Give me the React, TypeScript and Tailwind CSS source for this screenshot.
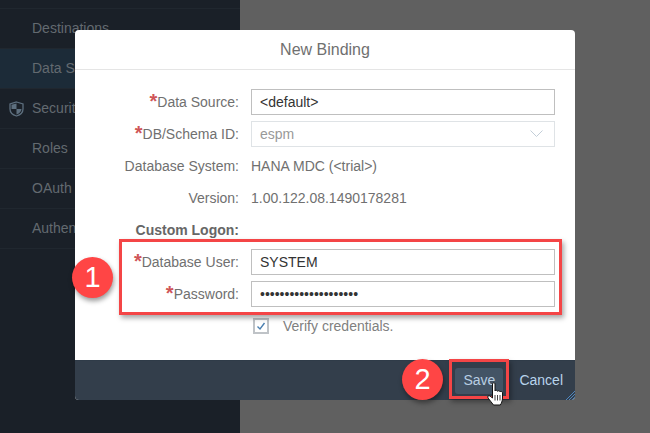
const FONT = "font-['Liberation_Sans',Arial,sans-serif]";

const NAV = [
	{ label: "Destinations" },
	{ label: "Data Sources", selected: true },
	{ label: "Security", icon: true, header: true },
	{ label: "Roles" },
	{ label: "OAuth" },
	{ label: "Authentication" },
];

function Shield() {
	return (
		<svg width="15" height="16" viewBox="0 0 15 16" className="absolute left-[9px] top-[12px]">
			<path d="M7.5 1 L14 3 V8 C14 11.5 11 14 7.5 15 C4 14 1 11.5 1 8 V3 Z" fill="none" stroke="#5d6f7f" strokeWidth="1.3" />
			<path d="M7.5 2.5 V8 H2.5 V3.8 Z" fill="#5d6f7f" />
			<path d="M7.5 8 H12.5 C12.2 10.8 10 12.6 7.5 13.5 Z" fill="#5d6f7f" />
		</svg>
	);
}

function Sidebar() {
	return (
		<div className="flex h-full w-[240px] shrink-0 flex-col bg-[#1a2028] pt-[8px]">
			{NAV.map((item) => (
				<div
					key={item.label}
					className={`relative flex h-[40px] items-center border-t border-[#20272f] pl-[32px] text-[14px] text-[#636a70] ${
						item.selected ? "bg-[#1c2b38]" : ""
					}`}
				>
					{item.icon && <Shield />}
					{item.label}
				</div>
			))}
			<div className="border-t border-[#20272f]" />
		</div>
	);
}

function Label({ text, required, bold }: { text: string; required?: boolean; bold?: boolean }) {
	return (
		<div className={`flex w-[164px] shrink-0 items-center justify-end text-[14px] ${bold ? "font-bold text-[#666666]" : "text-[#707070]"}`}>
			{required && <span className="mt-[-3px] text-[20px] leading-none font-bold text-[#cf5558]">*</span>}
			<span>{text}:</span>
		</div>
	);
}

function Row({ children, ...label }: { text: string; required?: boolean; bold?: boolean; children?: React.ReactNode }) {
	return (
		<div className="flex h-[32px] items-center gap-[12px]">
			<Label {...label} />
			{children}
		</div>
	);
}

function Input({ value, disabled, chevron }: { value: string; disabled?: boolean; chevron?: boolean }) {
	return (
		<div
			className={`flex h-[26px] w-[304px] items-center justify-between border pl-[8px] pr-[11px] text-[14px] ${
				disabled ? "border-[#dfe3e6] text-[#999999]" : "border-[#bfbfbf] text-[#333333]"
			}`}
		>
			<span>{value}</span>
			{chevron && (
				<svg width="13" height="8" viewBox="0 0 13 8">
					<path d="M0.5 0.5 L6.5 6.5 L12.5 0.5" fill="none" stroke="#c3ced8" strokeWidth="1" />
				</svg>
			)}
		</div>
	);
}

function Badge({ n, className }: { n: string; className: string }) {
	return (
		<div
			className={`absolute flex h-[41px] w-[41px] items-center justify-center rounded-full bg-[#ff4545] text-[29px] text-white shadow-[1px_3px_5px_rgba(0,0,0,0.4)] ${className}`}
		>
			{n}
		</div>
	);
}

function HandCursor() {
	return (
		<svg width="18" height="24" viewBox="0 0 18 24" className="absolute left-[487px] top-[382px] z-20">
			<path
				d="M5.5 1.8 C5.5 0.4 8 0.4 8 1.8 V9 C8.5 8 10.3 8 10.5 9.3 C11 8.4 12.8 8.5 13 9.8 C13.6 9 15.5 9.4 15.5 10.8 V16 C15.5 19 14.3 21.5 13.3 23 H6.5 C5 21 3 18.5 1 16 C0 14.4 1.7 13 3 14 L5.5 16 Z"
				fill="#ffffff"
				stroke="#111111"
				strokeWidth="1"
			/>
			<path d="M8 13 V18.5 M10.5 13 V18.5 M13 13 V18.5" stroke="#111111" strokeWidth="0.8" />
		</svg>
	);
}

export default function App() {
	return (
		<div className={`relative flex h-[433px] w-[650px] overflow-hidden bg-[#606060] ${FONT}`}>
			<Sidebar />

			{/* dialog */}
			<div className="absolute left-[75px] top-[30px] flex h-[370px] w-[500px] flex-col overflow-hidden rounded-[4px] bg-white">
				<div className="flex h-[40px] shrink-0 items-center justify-center border-b border-[#e5e5e5] text-[16px] text-[#707070]">
					New Binding
				</div>
				<div className="flex-1 pt-[16px]">
					<Row text="Data Source" required>
						<Input value="<default>" />
					</Row>
					<Row text="DB/Schema ID" required>
						<Input value="espm" disabled chevron />
					</Row>
					<Row text="Database System">
						<span className="text-[14px] text-[#707070]">HANA MDC (&lt;trial&gt;)</span>
					</Row>
					<Row text="Version">
						<span className="text-[14px] text-[#707070]">1.00.122.08.1490178281</span>
					</Row>
					<Row text="Custom Logon" bold />
					<Row text="Database User" required>
						<Input value="SYSTEM" />
					</Row>
					<Row text="Password" required>
						<Input value="••••••••••••••••••••" />
					</Row>
					<div className="flex h-[32px] items-center pl-[178px]">
						<div className="flex h-[16px] w-[16px] items-center justify-center border-2 border-[#bfc3c7]">
							<svg width="10" height="9" viewBox="0 0 10 9">
								<path d="M1.5 4.5 L4 7 L8.5 1" fill="none" stroke="#4a7fb0" strokeWidth="1.4" />
							</svg>
						</div>
						<span className="ml-[14px] text-[14px] text-[#808080]">Verify credentials.</span>
					</div>
				</div>
				<div className="relative flex h-[40px] shrink-0 items-center justify-end gap-[16px] border-t border-[#2f3b48] bg-[#333e4b] pr-[12px]">
					<div className="flex h-[26px] w-[48px] items-center justify-center rounded-[3px] bg-[#435465] text-[14px] text-[#b8cfe3]">
						Save
					</div>
					<span className="text-[14px] text-[#b8d4ec]">Cancel</span>
					<svg width="9" height="9" viewBox="0 0 9 9" className="absolute bottom-0 right-0">
						<path d="M9 0 L0 9 M9 3 L3 9 M9 6 L6 9" stroke="#4f86bd" strokeWidth="1" />
					</svg>
				</div>
			</div>

			{/* annotations */}
			<div className="absolute left-[119px] top-[239px] h-[76px] w-[443px] border-[3px] border-[#f44546] shadow-[2px_3px_5px_rgba(0,0,0,0.35)]" />
			<div className="absolute left-[449px] top-[359px] h-[40px] w-[60px] border-[3px] border-[#f44546] shadow-[2px_3px_5px_rgba(0,0,0,0.35)]" />
			<Badge n="1" className="left-[72px] top-[257px]" />
			<Badge n="2" className="left-[402px] top-[359px]" />
			<HandCursor />
		</div>
	);
}
